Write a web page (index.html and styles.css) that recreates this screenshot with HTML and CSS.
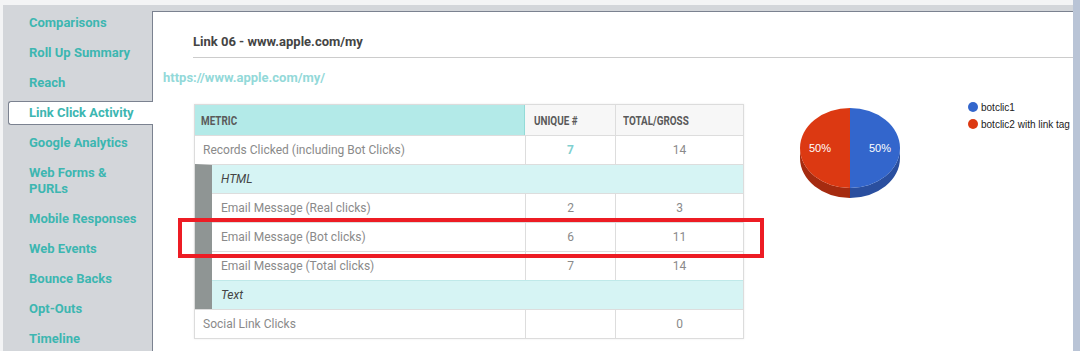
FILE: index.html
```html
<!DOCTYPE html>
<html lang="en">
<head>
    <meta charset="UTF-8">
    <meta name="viewport" content="width=device-width, initial-scale=1.0">
    <title>Link Click Activity</title>
    <link rel="stylesheet" href="styles.css">
</head>
<body>
    <div class="page">
        <div class="app">
            <nav class="sidebar">
                <a class="nav-item">Comparisons</a>
                <a class="nav-item">Roll Up Summary</a>
                <a class="nav-item">Reach</a>
                <a class="nav-item active">Link Click Activity</a>
                <a class="nav-item">Google Analytics</a>
                <a class="nav-item">Web Forms &amp;<br>PURLs</a>
                <a class="nav-item">Mobile Responses</a>
                <a class="nav-item">Web Events</a>
                <a class="nav-item">Bounce Backs</a>
                <a class="nav-item">Opt-Outs</a>
                <a class="nav-item">Timeline</a>
            </nav>
            <main class="main">
                <h2 class="link-title">Link 06 - www.apple.com/my</h2>
                <a class="link-url">https://www.apple.com/my/</a>
                <div class="report">
                    <div class="table-wrap">
                        <div class="tbl">
                            <div class="row head">
                                <div class="cell metric"><span>Metric</span></div>
                                <div class="cell uniq"><span>Unique #</span></div>
                                <div class="cell total"><span>Total/Gross</span></div>
                            </div>
                            <div class="row">
                                <div class="cell metric">Records Clicked (including Bot Clicks)</div>
                                <div class="cell uniq num link">7</div>
                                <div class="cell total num">14</div>
                            </div>
                            <div class="group">
                                <div class="row section">HTML</div>
                                <div class="row">
                                    <div class="cell metric">Email Message (Real clicks)</div>
                                    <div class="cell uniq num">2</div>
                                    <div class="cell total num">3</div>
                                </div>
                                <div class="row">
                                    <div class="cell metric">Email Message (Bot clicks)</div>
                                    <div class="cell uniq num">6</div>
                                    <div class="cell total num">11</div>
                                </div>
                                <div class="row">
                                    <div class="cell metric">Email Message (Total clicks)</div>
                                    <div class="cell uniq num">7</div>
                                    <div class="cell total num">14</div>
                                </div>
                                <div class="row section">Text</div>
                            </div>
                            <div class="row">
                                <div class="cell metric">Social Link Clicks</div>
                                <div class="cell uniq num"></div>
                                <div class="cell total num">0</div>
                            </div>
                        </div>
                        <div class="highlight"></div>
                    </div>
                    <svg class="chart" width="313" height="110" viewBox="0 0 313 110">
                        <path d="M140,52 A50,40 0 0 1 90,92 L90,102 A50,40 0 0 0 140,62 Z" fill="#2a4f9f"/>
                        <path d="M40,52 A50,40 0 0 0 90,92 L90,102 A50,40 0 0 1 40,62 Z" fill="#a52b10"/>
                        <path d="M90,12 A50,40 0 0 1 90,92 Z" fill="#3366cc"/>
                        <path d="M90,12 A50,40 0 0 0 90,92 Z" fill="#dc3912"/>
                        <text x="60" y="56" class="pie-label">50%</text>
                        <text x="120" y="56" class="pie-label">50%</text>
                        <circle cx="213" cy="11" r="5" fill="#3366cc"/>
                        <text x="221" y="15" class="legend">botclic1</text>
                        <circle cx="213" cy="28" r="5" fill="#dc3912"/>
                        <text x="221" y="32" class="legend">botclic2 with link tag</text>
                    </svg>
                </div>
            </main>
        </div>
        <div class="scrollbar"></div>
    </div>
</body>
</html>
```

FILE: styles.css
```css
html, body {
    margin: 0;
    height: 100%;
    overflow: hidden;
}
body {
    font-family: Roboto, "Liberation Sans", sans-serif;
    background-color: #f3f4f5;
    color: #333;
}
.page {
    display: flex;
    height: 100%;
}
.app {
    flex: 1;
    display: flex;
    margin-top: 5px;
    margin-left: 3px;
    background-color: #d3d6da;
}
.scrollbar {
    width: 7px;
    background-color: #b9c4d6;
}
.sidebar {
    width: 149px;
    flex-shrink: 0;
    padding-top: 3px;
    display: flex;
    flex-direction: column;
}
.nav-item {
    display: block;
    padding: 7px 0 7px 26px;
    font-size: 13px;
    line-height: 16px;
    font-weight: bold;
    color: #3db6b1;
    cursor: pointer;
}
.nav-item.active {
    position: relative;
    z-index: 1;
    margin: 3px -1px 3px 5px;
    padding: 3px 0 3px 20px;
    background-color: white;
    border: 1px solid #7b8290;
    border-right: none;
    border-radius: 3px 0 0 3px;
}
.main {
    flex: 1;
    margin-top: 6px;
    background-color: white;
    border-top: 1px solid #7b8290;
    border-left: 1px solid #7b8290;
}
.link-title {
    margin: 0 0 0 40px;
    padding: 22px 0 7px;
    font-size: 13px;
    line-height: 16px;
    color: #444;
    border-bottom: 1px solid #cccccc;
}
.link-url {
    display: block;
    margin: 12px 0 0 10px;
    font-size: 13px;
    line-height: 16px;
    font-weight: bold;
    color: #93d9d9;
}
.report {
    display: flex;
    align-items: flex-start;
    margin-top: 18px;
    margin-left: 41px;
}
.table-wrap {
    position: relative;
}
.tbl {
    width: 548px;
    border: 1px solid #dcdcdc;
    box-shadow: 0 0 2px rgba(0, 0, 0, 0.08);
}
.row {
    display: flex;
    height: 28px;
    border-top: 1px solid #dddddd;
}
.row.head {
    height: 30px;
    border-top: none;
}
.cell {
    box-sizing: border-box;
    display: flex;
    align-items: center;
    font-size: 12px;
    color: #8a8a8a;
}
.metric {
    flex: 1;
    padding-left: 8px;
}
.uniq {
    width: 90px;
    border-left: 1px solid #dddddd;
}
.total {
    width: 128px;
    border-left: 1px solid #dddddd;
}
.num {
    justify-content: center;
}
.num.link {
    color: #7fd0d0;
    font-weight: bold;
}
.head .cell {
    font-size: 13px;
    font-weight: bold;
    text-transform: uppercase;
    color: #5a5a5a;
    background-color: #f7f7f7;
}
.head .cell span {
    display: inline-block;
    transform: scaleX(0.76);
    transform-origin: left center;
    white-space: nowrap;
}
.head .metric {
    padding-left: 6px;
    background-color: #b3eae8;
    border-right: 1px solid #93dbd8;
}
.head .uniq {
    padding-left: 9px;
    border-left: none;
}
.head .total {
    padding-left: 7px;
}
.group {
    border-top: 1px solid #dddddd;
    border-left: 17px solid #8f9594;
}
.group .row:first-child {
    border-top: none;
}
.group .metric {
    padding-left: 9px;
}
.row.section {
    align-items: center;
    padding-left: 9px;
    font-size: 12px;
    font-style: italic;
    color: #444;
    background-color: #d6f4f4;
    border-top-color: #bfe9e9;
}
.highlight {
    position: absolute;
    left: -16px;
    top: 114px;
    width: 578px;
    height: 32px;
    border: 4px solid #ed1c24;
}
.chart {
    margin-left: 16px;
    margin-top: -8px;
    flex-shrink: 0;
}
.pie-label {
    font-family: "Liberation Sans", Arial, sans-serif;
    font-size: 11px;
    fill: white;
    text-anchor: middle;
}
.legend {
    font-family: "Liberation Sans", Arial, sans-serif;
    font-size: 10px;
    fill: #222;
}
```
